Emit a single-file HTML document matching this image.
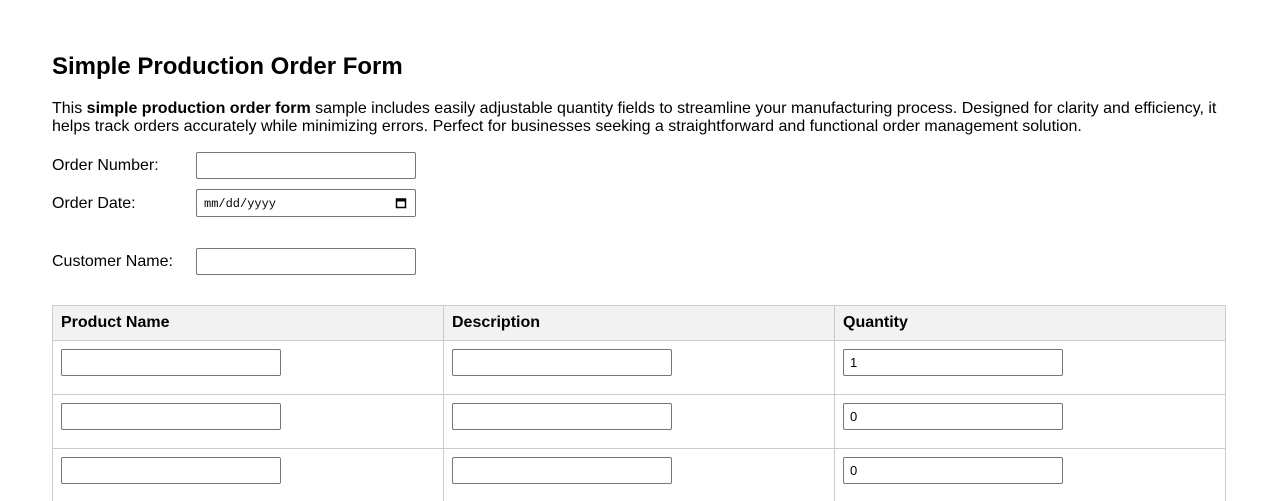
<!DOCTYPE html>
<html><head><style>
body{margin:0;width:1278px;height:501px;overflow:hidden;background:#fff;font-family:"Liberation Sans",Arial,sans-serif;color:#000;position:relative}
.a{position:absolute}
.in{position:absolute;width:218px;height:25px;border:1px solid #767676;border-radius:2px;background:#fff;font-size:13px;line-height:25px;box-sizing:content-box}
.lbl{position:absolute;font-size:16px;left:52px}
.th{position:absolute;top:305px;height:35px;background:#f2f2f2;font-weight:bold;font-size:16px;line-height:35px;padding-left:9px;box-sizing:border-box}
.hl{position:absolute;left:52px;width:1174px;height:1px;background:#ccc}
.vl{position:absolute;top:305px;height:196px;width:1px;background:#ccc}
</style></head><body>
<div class="a" style="left:52px;top:53px;font-size:24px;font-weight:bold">Simple Production Order Form</div>
<div class="a" style="left:52px;top:100px;width:1180px;font-size:16px;line-height:18px">This <b>simple production order form</b> sample includes easily adjustable quantity fields to streamline your manufacturing process. Designed for clarity and efficiency, it helps track orders accurately while minimizing errors. Perfect for businesses seeking a straightforward and functional order management solution.</div>
<div class="lbl" style="top:157px">Order Number:</div>
<div class="in" style="left:196px;top:152px"></div>
<div class="lbl" style="top:195px">Order Date:</div>
<div class="in" style="left:196px;top:189px;height:26px;font-family:'Liberation Mono',monospace;font-size:12px;line-height:29px"><span style="margin-left:7px">mm/dd/yyyy</span>
<svg style="position:absolute;right:8px;top:7px" width="12" height="12" viewBox="0 0 12 12"><rect x="1.5" y="2" width="9" height="8.5" fill="none" stroke="#000" stroke-width="1.5"/><rect x="1" y="2" width="10" height="2.5" fill="#000"/></svg></div>
<div class="lbl" style="top:253px">Customer Name:</div>
<div class="in" style="left:196px;top:248px"></div>

<div class="th" style="left:52px;width:391px;line-height:36px">Product Name</div>
<div class="th" style="left:443px;width:391px;line-height:36px">Description</div>
<div class="th" style="left:834px;width:391px;line-height:36px">Quantity</div>
<div class="hl" style="top:305px"></div>
<div class="hl" style="top:340px"></div>
<div class="hl" style="top:394px"></div>
<div class="hl" style="top:448px"></div>
<div class="vl" style="left:52px"></div>
<div class="vl" style="left:443px"></div>
<div class="vl" style="left:834px"></div>
<div class="vl" style="left:1225px"></div>

<div class="in" style="left:61px;top:349px"></div>
<div class="in" style="left:452px;top:349px"></div>
<div class="in" style="left:843px;top:349px"><span style="margin-left:6px">1</span></div>
<div class="in" style="left:61px;top:403px"></div>
<div class="in" style="left:452px;top:403px"></div>
<div class="in" style="left:843px;top:403px"><span style="margin-left:6px">0</span></div>
<div class="in" style="left:61px;top:457px"></div>
<div class="in" style="left:452px;top:457px"></div>
<div class="in" style="left:843px;top:457px"><span style="margin-left:6px">0</span></div>
</body></html>
